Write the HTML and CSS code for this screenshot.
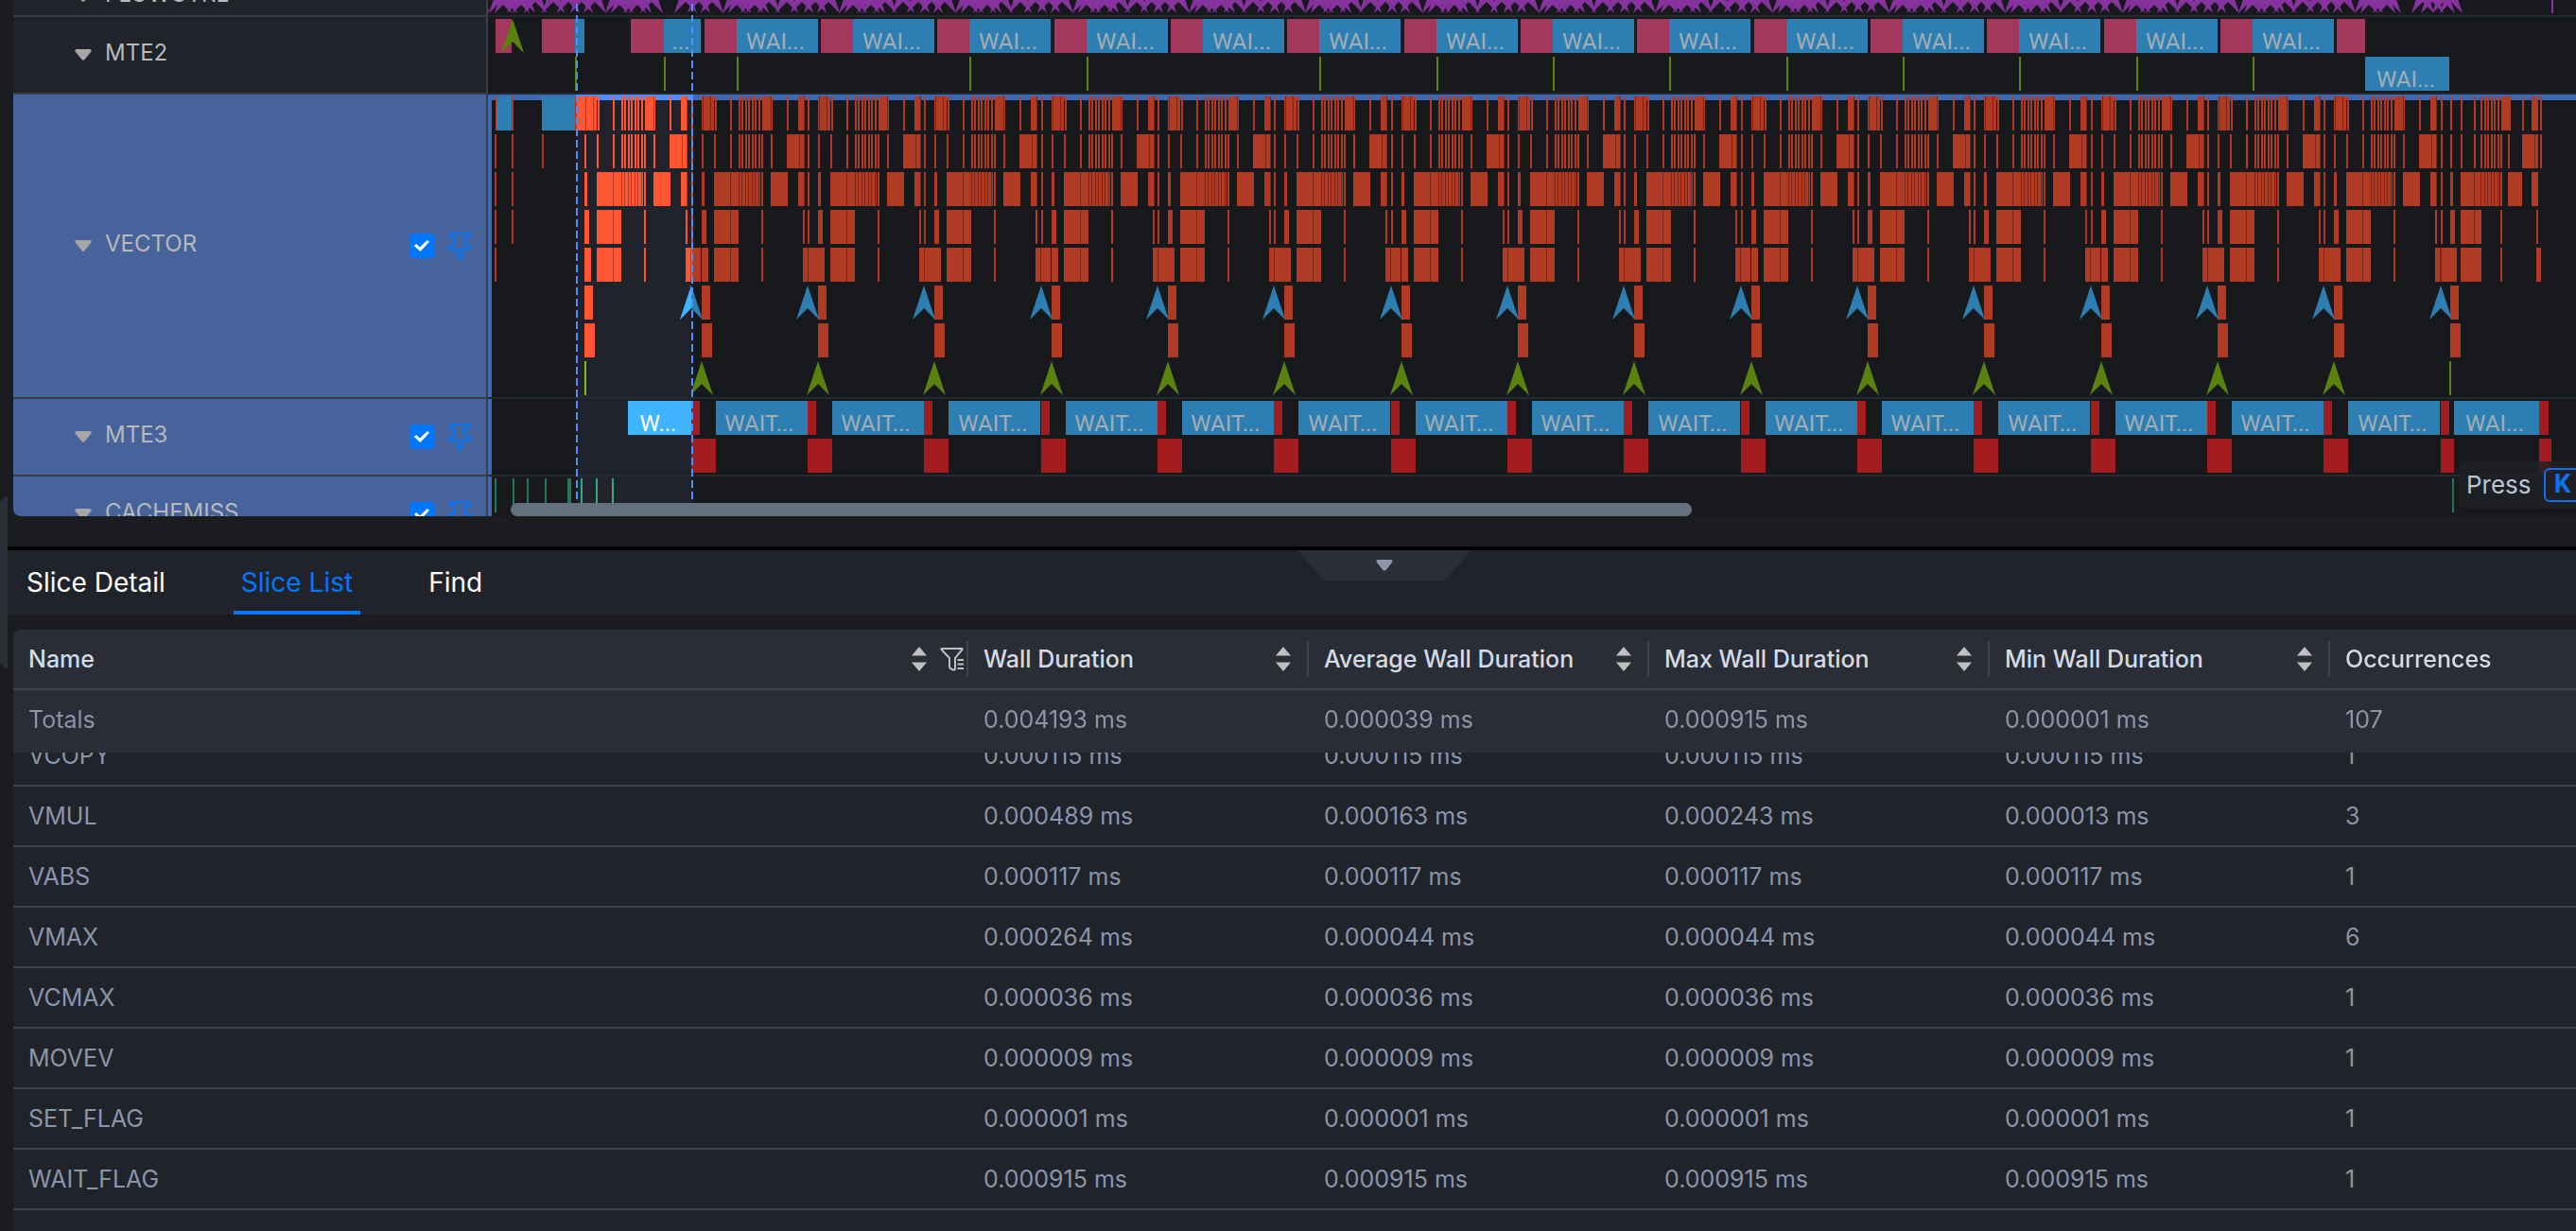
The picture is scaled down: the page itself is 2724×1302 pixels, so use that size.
FILE: index.html
```
<!DOCTYPE html>
<html lang="en">
<head>
    <meta charset="UTF-8">
    <meta name="viewport" content="width=device-width, initial-scale=1.0">
    <title>Timeline</title>
    <link rel="stylesheet" href="styles.css">
</head>
<body>
    <svg class="sprite" aria-hidden="true">
        <symbol id="caret" viewBox="0 0 18 12"><path d="M1.5 0h15q2 1 .5 3l-6.500 8q-1.500 1.500-3 0L1 3Q-.5 1 1.500 0z"/></symbol>
        <symbol id="pin" viewBox="0 0 24 28"><path d="M4 1H20Q22.5 1 22.5 3T20 5H17.5V12.500L21 14Q23 15 23 16.500T21 18H14V25Q14 27 12 27T10 25V18H3Q1 18 1 16.500T3 14L6.500 12.500V5H4Q1.500 5 1.500 3T4 1z"/></symbol>
        <symbol id="sort" viewBox="0 0 16 28"><path d="M8 1l8 9.500H0zM8 27l8-9.500H0z"/></symbol>
        <symbol id="filter" viewBox="0 0 26 26"><path d="M2 2h21q1 0 .5 1l-7.500 9v11q0 2-2 1.500l-3-1.500q-1-.5-1-2v-9L1.500 3Q1 2 2 2zM18.500 14H25M18.500 18.500H25M18.500 23H25"/></symbol>
    </svg>

    <button class="side-handle" aria-label="Toggle side panel"></button>

    <main>
        <section class="timeline" id="timeline">
            <div class="unit">
                <div class="unit-head"><svg class="caret"><use href="#caret"/></svg><span>FLOWCTRL</span></div>
                <svg class="lane" id="flow"></svg>
            </div>
            <div class="unit">
                <div class="unit-head"><svg class="caret"><use href="#caret"/></svg><span>MTE2</span></div>
                <svg class="lane" id="mte2"></svg>
            </div>
            <div class="unit selected">
                <div class="unit-head"><svg class="caret"><use href="#caret"/></svg><label for="chk-vector">VECTOR</label>
                    <input type="checkbox" id="chk-vector" checked>
                    <button class="pin" aria-label="Pin VECTOR"><svg><use href="#pin"/></svg></button></div>
                <svg class="lane tall" id="vector"></svg>
            </div>
            <div class="unit selected">
                <div class="unit-head"><svg class="caret"><use href="#caret"/></svg><label for="chk-mte3">MTE3</label>
                    <input type="checkbox" id="chk-mte3" checked>
                    <button class="pin" aria-label="Pin MTE3"><svg><use href="#pin"/></svg></button></div>
                <svg class="lane" id="mte3"></svg>
            </div>
            <div class="unit selected">
                <div class="unit-head"><svg class="caret"><use href="#caret"/></svg><label for="chk-cache">CACHEMISS</label>
                    <input type="checkbox" id="chk-cache" checked>
                    <button class="pin" aria-label="Pin CACHEMISS"><svg><use href="#pin"/></svg></button></div>
                <svg class="lane" id="cache"></svg>
            </div>
        </section>
        <div class="overlay">
            <div class="range"></div>
            <div class="scroll-thumb"></div>
            <div class="hint">Press <kbd>K</kbd></div>
        </div>

        <section class="bottom">
            <nav class="tabs">
                <button>Slice Detail</button>
                <button class="active">Slice List</button>
                <button>Find</button>
            </nav>
            <button class="fold" aria-label="Collapse panel"><svg class="caret"><use href="#caret"/></svg></button>
            <div class="table-wrap" id="slices">
                <table>
                    <colgroup><col><col class="num"><col class="num"><col class="num"><col class="num"><col class="last"></colgroup>
                    <thead>
                        <tr>
                            <th><div>Name<button class="sort" aria-label="Sort"><svg><use href="#sort"/></svg></button><button class="filter" aria-label="Filter"><svg><use href="#filter"/></svg></button></div></th>
                            <th><div>Wall Duration<button class="sort" aria-label="Sort"><svg><use href="#sort"/></svg></button></div></th>
                            <th><div>Average Wall Duration<button class="sort" aria-label="Sort"><svg><use href="#sort"/></svg></button></div></th>
                            <th><div>Max Wall Duration<button class="sort" aria-label="Sort"><svg><use href="#sort"/></svg></button></div></th>
                            <th><div>Min Wall Duration<button class="sort" aria-label="Sort"><svg><use href="#sort"/></svg></button></div></th>
                            <th><div>Occurrences</div></th>
                        </tr>
                        <tr class="totals"><td>Totals</td><td>0.004193 ms</td><td>0.000039 ms</td><td>0.000915 ms</td><td>0.000001 ms</td><td>107</td></tr>
                    </thead>
                    <tbody>
                        <tr><td>VCOPY</td><td>0.000115 ms</td><td>0.000115 ms</td><td>0.000115 ms</td><td>0.000115 ms</td><td>1</td></tr>
                        <tr><td>VMUL</td><td>0.000489 ms</td><td>0.000163 ms</td><td>0.000243 ms</td><td>0.000013 ms</td><td>3</td></tr>
                        <tr><td>VABS</td><td>0.000117 ms</td><td>0.000117 ms</td><td>0.000117 ms</td><td>0.000117 ms</td><td>1</td></tr>
                        <tr><td>VMAX</td><td>0.000264 ms</td><td>0.000044 ms</td><td>0.000044 ms</td><td>0.000044 ms</td><td>6</td></tr>
                        <tr><td>VCMAX</td><td>0.000036 ms</td><td>0.000036 ms</td><td>0.000036 ms</td><td>0.000036 ms</td><td>1</td></tr>
                        <tr><td>MOVEV</td><td>0.000009 ms</td><td>0.000009 ms</td><td>0.000009 ms</td><td>0.000009 ms</td><td>1</td></tr>
                        <tr><td>SET_FLAG</td><td>0.000001 ms</td><td>0.000001 ms</td><td>0.000001 ms</td><td>0.000001 ms</td><td>1</td></tr>
                        <tr><td>WAIT_FLAG</td><td>0.000915 ms</td><td>0.000915 ms</td><td>0.000915 ms</td><td>0.000915 ms</td><td>1</td></tr>
                    </tbody>
                </table>
            </div>
        </section>
    </main>
    <script src="script.js"></script>
</body>
</html>
```
FILE: styles.css
```
* {
    box-sizing: border-box;
}

body {
    margin: 0;
    height: 100vh;
    overflow: hidden;
    background-color: #1b1c20;
    color: #8b95a9;
    font-family: Inter, sans-serif;
    font-size: 24px;
    line-height: 32px;
}

button {
    padding: 0;
    border: none;
    background: none;
    color: inherit;
    font: inherit;
    cursor: pointer;
}

.sprite {
    display: none;
}

main {
    position: relative;
    display: flex;
    flex-direction: column;
    height: 100vh;
    margin-left: 8px;
}

.side-handle {
    position: absolute;
    left: 0;
    top: 524px;
    width: 8px;
    height: 184px;
    background-color: #2a2e36;
    clip-path: polygon(0 6px, 100% 0, 100% 100%, 0 178px);
}

/* timeline */
.timeline {
    flex: none;
    height: 546px;
    margin-left: 6px;
    overflow: hidden;
    border-radius: 0 0 0 8px;
    background-color: #18191d;
}

.unit {
    display: flex;
}

.unit-head {
    display: flex;
    flex: none;
    align-items: center;
    width: 502px;
    padding: 0 16px 0 65px;
    border-right: 2px solid #3a3d45;
    border-bottom: 2px solid #3a3d45;
    background-color: #20232a;
    color: #b9b9b9;
}

.unit-head span,
.unit-head label {
    flex: 1;
    margin-left: 14px;
    padding-bottom: 4px;
}

.selected .unit-head {
    background-color: #47639b;
}

.caret {
    width: 18px;
    height: 12px;
    fill: #a6a6a6;
}

input[type="checkbox"] {
    appearance: none;
    display: grid;
    place-items: center;
    width: 26px;
    height: 26px;
    margin: 0 15px 0 0;
    border-radius: 4px;
    background-color: #0077ff;
}

input[type="checkbox"]:checked::after {
    content: "";
    width: 16px;
    height: 12px;
    background-color: #fff;
    clip-path: polygon(0 50%, 14% 34%, 37% 62%, 86% 0, 100% 14%, 40% 100%);
}

.pin {
    display: flex;
}

.pin svg {
    width: 24px;
    height: 28px;
    fill: none;
    stroke: #0077ff;
    stroke-width: 2;
}

.lane {
    flex: 1;
    min-width: 0;
    height: 82px;
    border-bottom: 2px solid #24292e;
    font-family: Roboto, sans-serif;
    font-size: 24px;
}

.lane.tall {
    height: 322px;
}

#flow {
    height: 42px;
}

.lane text {
    fill: #a2adb4;
    text-anchor: middle;
}

.lane text.on { fill: #fff; }
.shade { fill: #20232b; }
.edge { fill: #3d68b5; }
.edge.on { fill: #528dff; }
.purple { fill: #86329f; }
.pink { fill: #a3375c; }
.blue { fill: #2d7fb3; }
.blue.on { fill: #40b4ff; }
.orange { fill: #b03a24; }
.orange.on { fill: #ff5533; }
.red { fill: #a31c1f; }
.green { fill: #5a820f; }
.green.on { fill: #82ba16; }
.teal { fill: #217a54; }
.teal.on { fill: #2fae78; }
.line { fill: #000; fill-opacity: 0.3; }

.overlay {
    position: absolute;
    top: 0;
    right: 0;
    left: 0;
    height: 546px;
    overflow: hidden;
    pointer-events: none;
}

.range {
    position: absolute;
    top: 4px;
    left: 601px;
    width: 124px;
    height: 524px;
    background: repeating-linear-gradient(#528dff 0 8px, transparent 8px 12px) left / 2px 100% no-repeat,
        repeating-linear-gradient(#528dff 0 8px, transparent 8px 12px) right / 2px 100% no-repeat;
}

.scroll-thumb {
    position: absolute;
    bottom: 0;
    left: 532px;
    width: 46%;
    height: 14px;
    border-radius: 7px;
    background-color: #64707d;
}

.hint {
    position: absolute;
    right: -16px;
    bottom: 8px;
    display: flex;
    align-items: center;
    gap: 13px;
    width: 140px;
    height: 50px;
    padding-left: 8px;
    border-radius: 8px;
    background-color: rgba(31, 32, 37, 0.8);
    color: #bcc4d0;
    font-size: 26px;
}

kbd {
    flex: none;
    width: 40px;
    height: 36px;
    border: 2px solid #0f70ee;
    border-radius: 6px;
    color: #0f70ee;
    font: bold 28px/30px Roboto, sans-serif;
    text-align: center;
}

/* bottom panel */
.bottom {
    position: relative;
    display: flex;
    flex: 1;
    flex-direction: column;
    min-height: 0;
    margin-top: 32px;
    border-top: 4px solid #000;
}

.tabs {
    display: flex;
    gap: 64px;
    height: 68px;
    padding-left: 12px;
    background-color: #20232a;
    color: #fff;
    font-size: 28px;
}

.tabs button {
    padding: 0 8px;
    border-top: 4px solid transparent;
    border-bottom: 4px solid transparent;
}

.tabs .active {
    border-bottom-color: #0077ff;
    color: #0077ff;
}

.fold {
    position: absolute;
    top: 0;
    left: 1364px;
    display: flex;
    justify-content: center;
    width: 184px;
    height: 32px;
    padding-top: 10px;
    background-color: #2a2e36;
    clip-path: polygon(0 0, 100% 0, 156px 100%, 28px 100%);
}

.fold .caret {
    width: 22px;
    fill: #8d98ad;
}

.table-wrap {
    flex: 1;
    min-height: 0;
    margin: 16px 0 0 6px;
    overflow: auto;
    scrollbar-width: none;
    border-radius: 8px 0 0 0;
    background-color: #20232a;
}

table {
    width: 100%;
    margin-bottom: 64px;
    border-spacing: 0;
    table-layout: fixed;
    font-size: 25px;
}

.num {
    width: 360px;
}

.last {
    width: 260px;
}

thead {
    position: sticky;
    top: 0;
    background-color: #2a2d35;
}

th, td {
    height: 64px;
    padding: 0 0 0 16px;
    border-bottom: 2px solid #3e424e;
    text-align: left;
}

th {
    color: #d3dbe7;
    font-weight: 500;
}

.totals td {
    height: 66px;
    padding-bottom: 4px;
    border-bottom: none;
}

th div {
    display: flex;
    align-items: center;
    height: 38px;
    padding-right: 17px;
    border-right: 2px solid #3e424e;
}

th:first-child div {
    padding-right: 2px;
}

th:last-child div {
    border-right: none;
}

.sort {
    display: flex;
    margin-left: auto;
}

.sort svg {
    width: 16px;
    height: 28px;
    fill: #bfbfbf;
}

.filter {
    display: flex;
    margin-left: 14px;
}

.filter svg {
    width: 26px;
    height: 26px;
    fill: none;
    stroke: #bfbfbf;
    stroke-width: 2;
}
```
FILE: script.js
```
const NS = 'http://www.w3.org/2000/svg';
const LEFT = 516;          // x of the lanes in the window
const FIRST = 730.5;       // start of the first full loop
const PERIOD = 370 / 3;    // loop length
const SEL = [610, 732];    // selected range

const add = (lane, tag, cls, attrs) => {
    const el = document.createElementNS(NS, tag);
    el.setAttribute('class', cls);
    for (const key in attrs) el.setAttribute(key, attrs[key]);
    document.getElementById(lane).appendChild(el);
    return el;
};

const rect = (lane, cls, x, y, w, h) => {
    const left = Math.round(x);
    add(lane, 'rect', cls, { x: left - LEFT, y, width: Math.round(x + w) - left, height: h });
};

// one slice on row `row`, brighter where it lies in the selected range
const bar = (lane, cls, row, x, w) => {
    const y = 2 + row * 40;
    rect(lane, cls, x, y, w, 36);
    const from = Math.max(x, SEL[0]), to = Math.min(x + w, SEL[1]);
    if (to > from && lane !== 'mte2') rect(lane, cls + ' on', from, y, to - from, 36);
};

const arrow = (lane, cls, row, cx) => {
    const x = Math.round(cx) - LEFT, y = 2 + row * 40;
    add(lane, 'path', cls, { d: `M${x} ${y}l12 36l-12 -12l-12 12z` });
};

const name = (lane, row, x, w, text, cls = '') => {
    add(lane, 'text', cls, { x: Math.round(x + w / 2) - 2 - LEFT, y: 34 + row * 40 }).textContent = text;
};

const at = k => FIRST + k * PERIOD;

['vector', 'mte3', 'cache'].forEach(lane => {
    rect(lane, 'shade', SEL[0], 0, 122, lane === 'cache' ? 28 : 320);
    rect(lane, 'edge', 516, 0, 4, 320);
});
rect('vector', 'edge', 516, 0, 3000, 6);
rect('vector', 'edge on', 609, 0, 124, 6);

// FLOWCTRL
const flow = [0, 16, 30, 44, 67, 73, 86, 92, 104];
for (let k = -2; k < 15; k++) {
    flow.forEach(dx => {
        const x = at(k) - 22 + dx;
        if (x > 500 && x < 2535 && (x < 694 || x > 720)) arrow('flow', 'purple', 0, x);
    });
}
[2562, 2572, 2584, 2592].forEach(x => arrow('flow', 'purple', 0, x));
rect('flow', 'purple', 2698, 2, 2, 36);

// MTE2
bar('mte2', 'pink', 0, 524, 17);
bar('mte2', 'pink', 0, 573, 35);
bar('mte2', 'blue', 0, 608, 10);
bar('mte2', 'pink', 0, 667, 35);
bar('mte2', 'blue', 0, 702, 39);
name('mte2', 0, 702, 39, '...');
arrow('mte2', 'green', 0, 542);
bar('mte2', 'green', 1, 608, 2);
bar('mte2', 'green', 1, 702, 2);
for (let k = 0; k < 15; k++) {
    bar('mte2', 'pink', 0, at(k) + 14, k < 14 ? 34 : 30);
    if (k === 14) continue;
    bar('mte2', 'blue', 0, at(k) + 48, 86);
    name('mte2', 0, at(k) + 48, 86, 'WAI...');
    if (k !== 1 && k !== 4) bar('mte2', 'green', 1, at(k) + 48, 2);
}
bar('mte2', 'blue', 1, 2501, 89);
name('mte2', 1, 2501, 89, 'WAI...');

// VECTOR: [offset, width] of the slices of one loop, row by row
const fine = [50, 53, 57, 60, 64, 67, 71].map(x => [x, 2]);
const loop = [
    [[0, 2], [11, 13], [25, 2], [41, 2], ...fine, [75, 11], [101, 2], [113, 7]],
    [[0, 2], [11, 2], [24, 2], [41, 2], ...fine, [74, 2], [84, 2], [101, 19]],
    [[11, 3], [24, 49], [74, 2], [84, 18], [113, 7]],
    [[11, 5], [24, 26], [74, 2], [118, 2]],
    [[11, 7], [24, 26], [74, 2], [118, 16]],
    [[11, 9]],
    [[11, 11]]
];
const cuts = [
    [12, 20, 84, 119],
    [114, 119],
    [41, 50, 53, 57, 60, 64, 67, 71, 119],
    [41],
    [41, 123]
];
// the last loop is shorter
const fineLast = [42, 46, 49, 53, 56, 60].map(x => [x, 2]);
const lastLoop = [
    [[0, 2], [10, 2], [21, 2], [35, 2], ...fineLast, [64, 10], [86, 2], [96, 7], [105, 2]],
    [[0, 2], [10, 2], [21, 2], [35, 2], ...fineLast, [63, 2], [71, 2], [86, 17], [105, 2]],
    [[0, 2], [10, 3], [21, 41], [63, 2], [71, 15], [96, 7]],
    [[0, 2], [10, 5], [21, 22], [63, 2], [101, 2]],
    [[10, 7], [21, 22], [63, 2], [101, 5]],
    [[10, 9]],
    [[10, 11]]
];
bar('vector', 'orange', 0, 524, 1);
bar('vector', 'blue', 0, 525, 16);
bar('vector', 'blue', 0, 573, 35);
bar('vector', 'orange', 0, 608, 11);
for (let row = 0; row < 5; row++) {
    if (row) bar('vector', 'orange', row, 523, 2);
    if (row < 4) bar('vector', 'orange', row, 541, 2);
}
bar('vector', 'orange', 1, 573, 2);
for (let k = -1; k < 16; k++) {
    const last = k === 15;
    (last ? lastLoop : loop).forEach((slices, row) => {
        slices.forEach(([x, w]) => {
            if (k === -1 && (row === 1 || row === 0) && x === 0) return;
            bar('vector', 'orange', row, at(k) + x, w);
        });
    });
    if (k >= 0 && !last) {
        bar('vector', 'orange', 2, at(k), 2);
        bar('vector', 'orange', 3, at(k), 2);
    }
    const lines = last ? [[], [99], [35, 42, 46, 49, 53, 56, 60], [35], [0]] : cuts;
    lines.forEach((xs, row) => xs.forEach(x => rect('vector', 'line', at(k) + x, 2 + row * 40, 1, 36)));
    if (k >= 0) arrow('vector', 'blue', 5, at(k));
    if (k >= 0 && !last) arrow('vector', 'green', 7, at(k) + 11);
}
// the half of the first arrow that is inside the range
add('vector', 'path', 'blue on', { d: 'M215 202v24l-12 12z' });
bar('vector', 'green', 7, 618, 2);
bar('vector', 'green', 7, 2590, 2);

// MTE3
bar('mte3', 'blue', 0, 664, 67);
name('mte3', 0, 664, 67, 'W...', 'on');
for (let k = 0; k < 16; k++) {
    rect('mte3', 'red', at(k), 2, 9, 36);
    rect('mte3', 'red', at(k), 42, k < 15 ? 26 : 14, 36);
    if (k === 15) continue;
    bar('mte3', 'blue', 0, at(k) + 26, 97);
    name('mte3', 0, at(k) + 26, 97, 'WAIT...');
}
bar('mte3', 'blue', 0, 2595, 90);
name('mte3', 0, 2595, 90, 'WAI...');
bar('mte3', 'red', 0, 2685, 10);
bar('mte3', 'red', 1, 2685, 13);

// CACHEMISS
[[523, 2], [542, 2], [557, 2], [576, 2], [600, 4], [614, 2], [630, 2], [647, 2], [2593, 2]]
    .forEach(([x, w]) => bar('cache', 'teal', 0, x, w));

document.getElementById('timeline').scrollTop = 24;
document.getElementById('slices').scrollTop = 28;
```
